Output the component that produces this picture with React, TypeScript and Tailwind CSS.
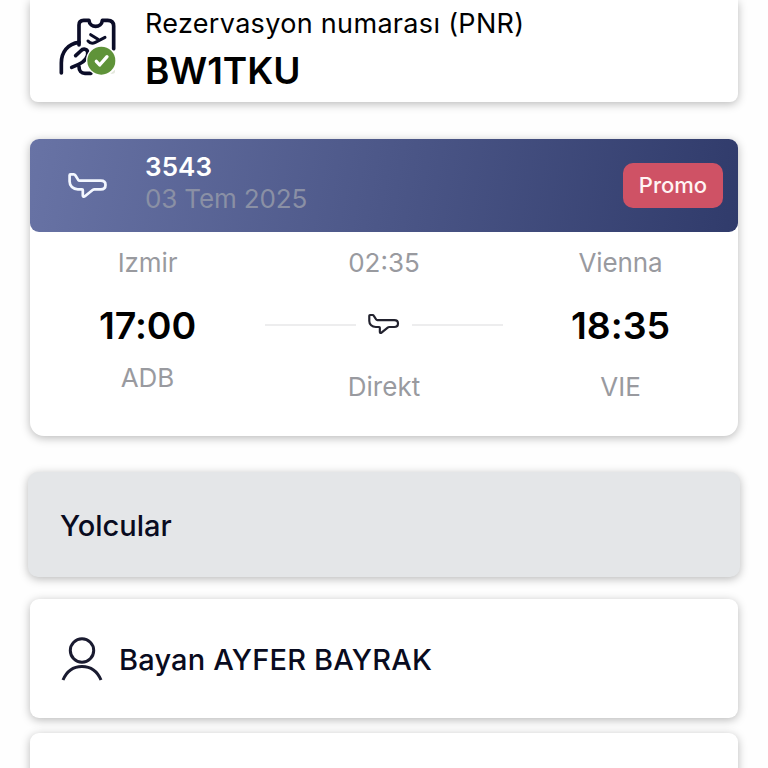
import type { ReactNode } from "react";
import { clsx } from "clsx";

function Card({ className, children }: { className?: string; children?: ReactNode }) {
  return (
    <section
      className={clsx("shrink-0 shadow-[0_2px_10px_rgba(0,0,0,0.28)]", className)}
    >
      {children}
    </section>
  );
}

function PlaneIcon({ className }: { className?: string }) {
  return (
    <svg
      viewBox="0 0 40 27"
      fill="none"
      stroke="currentColor"
      strokeLinecap="round"
      strokeLinejoin="round"
      className={className}
    >
      <path d="M2.5 2.3h3.2c.8 0 1.2.3 1.6 1l2.9 4.6c.4.6.8.8 1.5.8h21.1c2.9 0 4.7 1.6 4.7 4.2 0 2.7-1.9 4.4-4.7 4.4h-6.300c-.8 0-1.300.2-1.900.7l-7.700 6.300c-1 .8-2.100.4-2.100-.8v-5.400c0-.6-.3-.8-.8-.8H9.800C5 17.300 1.600 14 1.600 9.600V3.200c0-.6.3-.9.9-.9Z" />
    </svg>
  );
}

function TicketIcon() {
  return (
    <svg viewBox="0 0 180 180" fill="none" className="size-[60px] shrink-0">
      <g stroke="#0b0d28" strokeWidth="11" strokeLinecap="round" strokeLinejoin="round">
        <path d="M66 84V24q0-14 14-14h16c2 24 38 24 40 0h16q18 0 18 17v68" />
        <path d="M66 76C32 80 13 106 13 138v30" />
        <path d="M44 151l21-9c18-8 30-24 27-37-2-9-13-12-21-3l-15 14" />
        <path d="M66 149c0 12 7 20 18 20h18" />
        <path d="M93 72c6 7 14 8 22 4l29-15M101 53l22 14" strokeWidth="9" />
      </g>
      <circle cx="133" cy="131" r="46" fill="#fff" />
      <path d="M160 170l14-12v7q0 5-7 5Z" fill="#e3e7db" />
      <circle cx="133" cy="131" r="42" fill="#5f9339" />
      <path d="M118 133l10 11 22-25" stroke="#fff" strokeWidth="10" strokeLinecap="round" strokeLinejoin="round" />
    </svg>
  );
}

function PersonIcon() {
  return (
    <svg viewBox="0 0 42 46" fill="none" stroke="#1a1b30" strokeWidth="3" className="h-[46px] w-[42px]">
      <circle cx="21" cy="14.5" r="11.7" />
      <path d="M2 44C5.500 35.500 12 30.400 21 30.400S36.500 35.500 40 44" />
    </svg>
  );
}

function Stop({ city, time, code, className }: { city: string; time: string; code: string; className: string }) {
  return (
    <div className="flex flex-1 flex-col items-center text-[#999a9f]">
      <span className="h-8 text-[26px] leading-8 tracking-[-0.1px]">{city}</span>
      <strong className="mt-[25px] h-11 text-[37.5px] leading-11 font-semibold tracking-[-0.1px] text-black">{time}</strong>
      <span className={clsx("text-[26px] leading-8", className)}>{code}</span>
    </div>
  );
}

export default function App() {
  return (
    <main
      lang="tr"
      className="flex h-screen flex-col overflow-hidden bg-[#fefefe] px-[30px] font-['Inter',sans-serif] whitespace-nowrap"
    >
      <Card className="flex h-[102px] rounded-b-lg bg-white pl-[27px]">
        <div className="pt-[17px]">
          <TicketIcon />
        </div>
        <div className="ml-7 text-black">
          <p className="mt-2 text-[27px] leading-8 tracking-[0.32px]">Rezervasyon numarası (PNR)</p>
          <p className="mt-[9px] text-[37px] leading-11 font-semibold">BW1TKU</p>
        </div>
      </Card>

      <Card className="mt-[37px] h-[297px] rounded-[14px] rounded-t-[9px] bg-white">
        <header className="flex h-[93px] items-center rounded-[9px] bg-linear-[100deg] from-[#6873a5] to-[#303b6b] pr-[15px] pl-[38px]">
          <PlaneIcon className="h-[27px] w-10 stroke-[2.7] text-[#f3f7ff]" />
          <div className="ml-[37px] flex-1 pb-1.5">
            <p className="text-[26px] leading-8 font-semibold tracking-[0.1px] text-white">3543</p>
            <p className="text-[26px] leading-8 tracking-[-0.15px] text-[#8a90a5]">03 Tem 2025</p>
          </div>
          <span className="flex h-[45px] w-[100px] items-center justify-center rounded-[10px] bg-[#cf5265] text-[22px] font-medium text-[#fff4f3]">
            Promo
          </span>
        </header>

        <div className="flex pt-[15px]">
          <Stop city="Izmir" time="17:00" code="ADB" className="mt-3.5" />
          <div className="flex flex-1 flex-col items-center text-[26px] leading-8 text-[#999a9f]">
            <span>02:35</span>
            <div className="mt-8 flex h-7 w-full items-center justify-center">
              <div className="h-0.5 w-[91px] bg-[#ededee]" />
              <PlaneIcon className="mx-3 mb-0.5 h-[22px] w-8 stroke-[2.7] text-[#22222e]" />
              <div className="h-0.5 w-[91px] bg-[#ededee]" />
            </div>
            <span className="mt-8">Direkt</span>
          </div>
          <Stop city="Vienna" time="18:35" code="VIE" className="mt-[23px]" />
        </div>
      </Card>

      <Card className="-mx-0.5 mt-9 flex h-[105px] items-center rounded-[10px] bg-[#e4e6e8] pt-0.5 pl-8">
        <h2 className="text-[29px] font-medium text-[#090b20]">Yolcular</h2>
      </Card>

      <Card className="mt-[22px] flex h-[119px] items-center rounded-[9px] bg-white pl-[31px]">
        <PersonIcon />
        <span className="ml-4 pt-0.5 text-[29px] font-medium tracking-[0.18px] text-[#090b20]">Bayan AYFER BAYRAK</span>
      </Card>

      <Card className="mt-[15px] h-[119px] rounded-[9px] bg-white" />
    </main>
  );
}
